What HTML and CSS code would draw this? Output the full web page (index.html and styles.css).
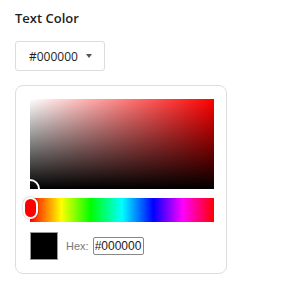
FILE: index.html
```html
<!DOCTYPE html>
<html lang="en">
<head>
    <meta charset="UTF-8">
    <meta name="viewport" content="width=device-width, initial-scale=1.0">
    <title>Text Color</title>
    <link rel="stylesheet" href="styles.css">
</head>
<body>
    <div class="field">
        <h3 class="field-label">Text Color</h3>
        <button class="color-toggle" type="button">
            <span>#000000</span>
            <span class="caret"></span>
        </button>
        <div class="picker">
            <div class="saturation">
                <div class="sat-handle"></div>
            </div>
            <div class="hue">
                <div class="hue-handle"></div>
            </div>
            <div class="hex-row">
                <div class="swatch"></div>
                <label class="hex-label">Hex:</label>
                <input class="hex-input" type="text" value="#000000">
            </div>
        </div>
    </div>
</body>
</html>
```

FILE: styles.css
```css
body {
    margin: 0;
    padding: 8px 15px;
    background: #fff;
    font-family: "Open Sans", Arial, sans-serif;
}
.field-label {
    margin: 0 0 13px 0;
    font-size: 13px;
    font-weight: 600;
    line-height: 20px;
    color: #1e1e1e;
}
.color-toggle {
    display: flex;
    align-items: center;
    gap: 8px;
    width: 90px;
    height: 30px;
    padding: 0 0 0 13px;
    background: #fff;
    border: 1px solid #dcdcde;
    border-radius: 3px;
    font-family: "Open Sans", Arial, sans-serif;
    font-size: 12px;
    color: #1e1e1e;
}
.caret {
    width: 0;
    height: 0;
    border-left: 3px solid transparent;
    border-right: 3px solid transparent;
    border-top: 4px solid #555;
}
.picker {
    box-sizing: border-box;
    width: 212px;
    margin-top: 14px;
    padding: 13px 12px 13px 14px;
    border: 1px solid #dddddd;
    border-radius: 8px;
}
.saturation {
    position: relative;
    overflow: hidden;
    height: 90px;
    background: linear-gradient(to top, #000, rgba(0, 0, 0, 0)),
                linear-gradient(to right, #fff, #ff0000);
}
.sat-handle {
    position: absolute;
    left: -10px;
    bottom: -10px;
    width: 16px;
    height: 16px;
    border: 2px solid #fff;
    border-radius: 50%;
    box-shadow: 0 0 1px rgba(0, 0, 0, 0.4);
}
.hue {
    position: relative;
    height: 24px;
    margin-top: 9px;
    background: linear-gradient(to right, #f00 0%, #ff0 17%, #0f0 33%, #0ff 50%, #00f 67%, #f0f 83%, #f00 100%);
}
.hue-handle {
    position: absolute;
    left: -7px;
    top: -1px;
    box-sizing: border-box;
    width: 15px;
    height: 22px;
    background: #f00;
    border: 2px solid #fff;
    border-radius: 8px;
    box-shadow: 0 0 2px rgba(0, 0, 0, 0.35);
}
.hex-row {
    display: flex;
    align-items: center;
    margin-top: 10px;
}
.swatch {
    width: 26px;
    height: 26px;
    background: #000;
    border: 1px solid #999;
}
.hex-label {
    margin-left: 8px;
    font-family: "Liberation Sans", Arial, sans-serif;
    font-size: 11px;
    color: #777;
}
.hex-input {
    box-sizing: border-box;
    width: 51px;
    height: 18px;
    margin-left: 4px;
    padding: 0 1px;
    border: 1px solid #888;
    border-radius: 2px;
    font-family: "Liberation Sans", Arial, sans-serif;
    font-size: 12px;
    color: #222;
}
```
